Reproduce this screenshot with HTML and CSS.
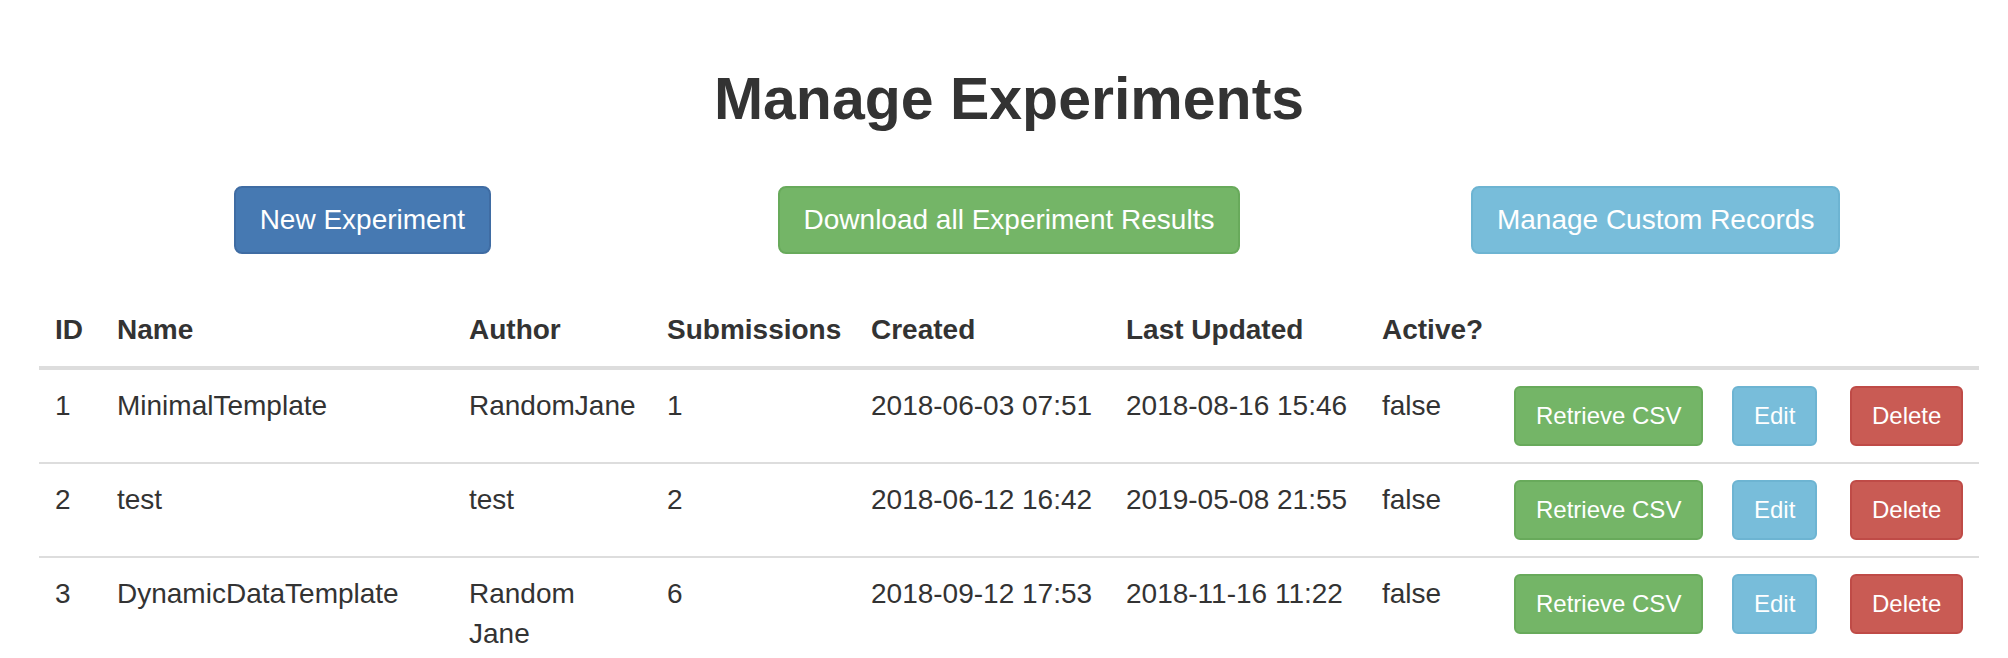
FILE: index.html
```html
<!DOCTYPE html>
<html lang="en">
<head>
<meta charset="utf-8">
<title>Manage Experiments</title>
<link rel="stylesheet" href="styles.css">
</head>
<body>
<div class="page">
  <h1 class="title">Manage Experiments</h1>
  <div class="actions">
    <div class="action-cell"><a class="btn btn-primary">New Experiment</a></div>
    <div class="action-cell"><a class="btn btn-success">Download all Experiment Results</a></div>
    <div class="action-cell"><a class="btn btn-info">Manage Custom Records</a></div>
  </div>
  <table class="experiments">
    <colgroup>
      <col class="c-id"><col class="c-name"><col class="c-author"><col class="c-subs">
      <col class="c-created"><col class="c-updated"><col class="c-active">
      <col class="c-csv"><col class="c-edit"><col class="c-del">
    </colgroup>
    <thead>
      <tr>
        <th>ID</th><th>Name</th><th>Author</th><th>Submissions</th><th>Created</th>
        <th>Last Updated</th><th>Active?</th><th></th><th></th><th></th>
      </tr>
    </thead>
    <tbody>
      <tr>
        <td>1</td><td>MinimalTemplate</td><td>RandomJane</td><td>1</td>
        <td>2018-06-03 07:51</td><td>2018-08-16 15:46</td><td>false</td>
        <td><a class="btn btn-sm btn-success">Retrieve CSV</a></td>
        <td><a class="btn btn-sm btn-info">Edit</a></td>
        <td><a class="btn btn-sm btn-danger">Delete</a></td>
      </tr>
      <tr>
        <td>2</td><td>test</td><td>test</td><td>2</td>
        <td>2018-06-12 16:42</td><td>2019-05-08 21:55</td><td>false</td>
        <td><a class="btn btn-sm btn-success">Retrieve CSV</a></td>
        <td><a class="btn btn-sm btn-info">Edit</a></td>
        <td><a class="btn btn-sm btn-danger">Delete</a></td>
      </tr>
      <tr>
        <td>3</td><td>DynamicDataTemplate</td><td>Random Jane</td><td>6</td>
        <td>2018-09-12 17:53</td><td>2018-11-16 11:22</td><td>false</td>
        <td><a class="btn btn-sm btn-success">Retrieve CSV</a></td>
        <td><a class="btn btn-sm btn-info">Edit</a></td>
        <td><a class="btn btn-sm btn-danger">Delete</a></td>
      </tr>
    </tbody>
  </table>
</div>
</body>
</html>
```
FILE: styles.css
```css
html, body {
  margin: 0;
  padding: 0;
  background: #ffffff;
  overflow: hidden;
}

body {
  font-family: "Liberation Sans", Arial, Helvetica, sans-serif;
  font-size: 28px;
  line-height: 40px;
  color: #333333;
}

.page {
  width: 1940px;
  padding: 0 29px 0 39px;
}

.title {
  margin: 60px 0 0;
  font-size: 59px;
  line-height: 79px;
  font-weight: bold;
  color: #333333;
  text-align: center;
}

.actions {
  display: grid;
  grid-template-columns: repeat(3, 1fr);
  margin: 47px 0 40px;
}

.action-cell {
  text-align: center;
}

.btn {
  display: inline-block;
  vertical-align: top;
  padding: 12px 24px;
  border: 2px solid transparent;
  border-radius: 8px;
  font-size: 28px;
  line-height: 40px;
  color: #ffffff;
  text-decoration: none;
  white-space: nowrap;
  cursor: pointer;
}

.btn-sm {
  padding: 10px 20px;
  font-size: 24px;
  line-height: 36px;
  border-radius: 6px;
}

.btn-primary { background: #4679b2; border-color: #3f6ca3; }
.btn-success { background: #74b567; border-color: #68aa5b; }
.btn-info    { background: #78bdda; border-color: #6db4d2; }
.btn-danger  { background: #c95b54; border-color: #bf4b47; }

.experiments {
  width: 1940px;
  border-collapse: collapse;
  table-layout: fixed;
}

.c-id { width: 62px; }
.c-name { width: 352px; }
.c-author { width: 198px; }
.c-subs { width: 204px; }
.c-created { width: 255px; }
.c-updated { width: 256px; }
.c-active { width: 132px; }
.c-csv { width: 218px; }
.c-edit { width: 118px; }
.c-del { width: 145px; }

.experiments th {
  padding: 16px;
  text-align: left;
  vertical-align: bottom;
  font-weight: bold;
  white-space: nowrap;
  border-bottom: 4px solid #dddddd;
}

.experiments td {
  padding: 16px;
  text-align: left;
  vertical-align: top;
  border-top: 2px solid #dddddd;
}
```
